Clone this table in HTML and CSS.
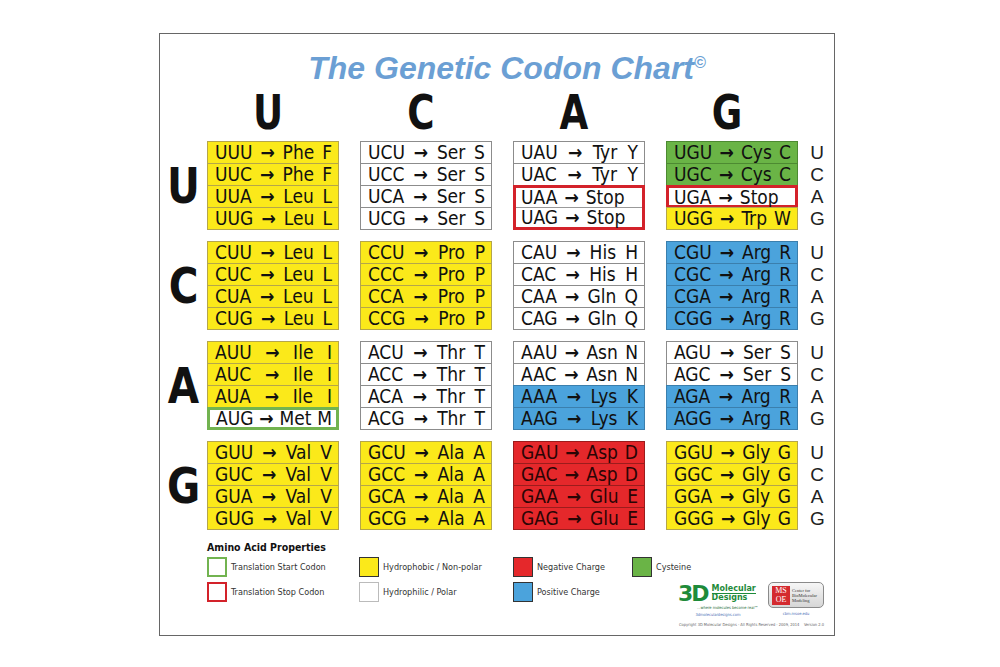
FILE: index.html
```html
<!DOCTYPE html>
<html>
<head>
<meta charset="utf-8">
<title>The Genetic Codon Chart</title>
<link rel="stylesheet" href="styles.css">
</head>
<body>
<div class="frame">
  <h1 class="title">The Genetic Codon Chart<sup>©</sup></h1>
  <div class="hdr"><span>U</span><span>C</span><span>A</span><span>G</span></div>

  <div class="grp">
    <div class="big">U</div>
    <div class="blocks">
      <div class="blk">
        <div class="c y"><span>UUU</span><span class="ar">→</span><span>Phe</span><span>F</span></div>
        <div class="c y"><span>UUC</span><span class="ar">→</span><span>Phe</span><span>F</span></div>
        <div class="c y"><span>UUA</span><span class="ar">→</span><span>Leu</span><span>L</span></div>
        <div class="c y"><span>UUG</span><span class="ar">→</span><span>Leu</span><span>L</span></div>
      </div>
      <div class="blk">
        <div class="c w"><span>UCU</span><span class="ar">→</span><span>Ser</span><span>S</span></div>
        <div class="c w"><span>UCC</span><span class="ar">→</span><span>Ser</span><span>S</span></div>
        <div class="c w"><span>UCA</span><span class="ar">→</span><span>Ser</span><span>S</span></div>
        <div class="c w"><span>UCG</span><span class="ar">→</span><span>Ser</span><span>S</span></div>
      </div>
      <div class="blk">
        <div class="c w"><span>UAU</span><span class="ar">→</span><span>Tyr</span><span>Y</span></div>
        <div class="c w"><span>UAC</span><span class="ar">→</span><span>Tyr</span><span>Y</span></div>
        <div class="stop two">
          <div class="c in"><span>UAA</span><span class="ar">→</span><span>Stop</span></div>
          <div class="c in"><span>UAG</span><span class="ar">→</span><span>Stop</span></div>
        </div>
      </div>
      <div class="blk">
        <div class="c g"><span>UGU</span><span class="ar">→</span><span>Cys</span><span>C</span></div>
        <div class="c g"><span>UGC</span><span class="ar">→</span><span>Cys</span><span>C</span></div>
        <div class="stop one">
          <div class="c in"><span>UGA</span><span class="ar">→</span><span>Stop</span></div>
        </div>
        <div class="c y"><span>UGG</span><span class="ar">→</span><span>Trp</span><span>W</span></div>
      </div>
    </div>
    <div class="side"><span>U</span><span>C</span><span>A</span><span>G</span></div>
  </div>

  <div class="grp">
    <div class="big">C</div>
    <div class="blocks">
      <div class="blk">
        <div class="c y"><span>CUU</span><span class="ar">→</span><span>Leu</span><span>L</span></div>
        <div class="c y"><span>CUC</span><span class="ar">→</span><span>Leu</span><span>L</span></div>
        <div class="c y"><span>CUA</span><span class="ar">→</span><span>Leu</span><span>L</span></div>
        <div class="c y"><span>CUG</span><span class="ar">→</span><span>Leu</span><span>L</span></div>
      </div>
      <div class="blk">
        <div class="c y"><span>CCU</span><span class="ar">→</span><span>Pro</span><span>P</span></div>
        <div class="c y"><span>CCC</span><span class="ar">→</span><span>Pro</span><span>P</span></div>
        <div class="c y"><span>CCA</span><span class="ar">→</span><span>Pro</span><span>P</span></div>
        <div class="c y"><span>CCG</span><span class="ar">→</span><span>Pro</span><span>P</span></div>
      </div>
      <div class="blk">
        <div class="c w"><span>CAU</span><span class="ar">→</span><span>His</span><span>H</span></div>
        <div class="c w"><span>CAC</span><span class="ar">→</span><span>His</span><span>H</span></div>
        <div class="c w"><span>CAA</span><span class="ar">→</span><span>Gln</span><span>Q</span></div>
        <div class="c w"><span>CAG</span><span class="ar">→</span><span>Gln</span><span>Q</span></div>
      </div>
      <div class="blk">
        <div class="c b"><span>CGU</span><span class="ar">→</span><span>Arg</span><span>R</span></div>
        <div class="c b"><span>CGC</span><span class="ar">→</span><span>Arg</span><span>R</span></div>
        <div class="c b"><span>CGA</span><span class="ar">→</span><span>Arg</span><span>R</span></div>
        <div class="c b"><span>CGG</span><span class="ar">→</span><span>Arg</span><span>R</span></div>
      </div>
    </div>
    <div class="side"><span>U</span><span>C</span><span>A</span><span>G</span></div>
  </div>

  <div class="grp">
    <div class="big">A</div>
    <div class="blocks">
      <div class="blk">
        <div class="c y"><span>AUU</span><span class="ar">→</span><span>Ile</span><span>I</span></div>
        <div class="c y"><span>AUC</span><span class="ar">→</span><span>Ile</span><span>I</span></div>
        <div class="c y"><span>AUA</span><span class="ar">→</span><span>Ile</span><span>I</span></div>
        <div class="c start"><span>AUG</span><span class="ar">→</span><span>Met</span><span>M</span></div>
      </div>
      <div class="blk">
        <div class="c w"><span>ACU</span><span class="ar">→</span><span>Thr</span><span>T</span></div>
        <div class="c w"><span>ACC</span><span class="ar">→</span><span>Thr</span><span>T</span></div>
        <div class="c w"><span>ACA</span><span class="ar">→</span><span>Thr</span><span>T</span></div>
        <div class="c w"><span>ACG</span><span class="ar">→</span><span>Thr</span><span>T</span></div>
      </div>
      <div class="blk">
        <div class="c w"><span>AAU</span><span class="ar">→</span><span>Asn</span><span>N</span></div>
        <div class="c w"><span>AAC</span><span class="ar">→</span><span>Asn</span><span>N</span></div>
        <div class="c b"><span>AAA</span><span class="ar">→</span><span>Lys</span><span>K</span></div>
        <div class="c b"><span>AAG</span><span class="ar">→</span><span>Lys</span><span>K</span></div>
      </div>
      <div class="blk">
        <div class="c w"><span>AGU</span><span class="ar">→</span><span>Ser</span><span>S</span></div>
        <div class="c w"><span>AGC</span><span class="ar">→</span><span>Ser</span><span>S</span></div>
        <div class="c b"><span>AGA</span><span class="ar">→</span><span>Arg</span><span>R</span></div>
        <div class="c b"><span>AGG</span><span class="ar">→</span><span>Arg</span><span>R</span></div>
      </div>
    </div>
    <div class="side"><span>U</span><span>C</span><span>A</span><span>G</span></div>
  </div>

  <div class="grp">
    <div class="big">G</div>
    <div class="blocks">
      <div class="blk">
        <div class="c y"><span>GUU</span><span class="ar">→</span><span>Val</span><span>V</span></div>
        <div class="c y"><span>GUC</span><span class="ar">→</span><span>Val</span><span>V</span></div>
        <div class="c y"><span>GUA</span><span class="ar">→</span><span>Val</span><span>V</span></div>
        <div class="c y"><span>GUG</span><span class="ar">→</span><span>Val</span><span>V</span></div>
      </div>
      <div class="blk">
        <div class="c y"><span>GCU</span><span class="ar">→</span><span>Ala</span><span>A</span></div>
        <div class="c y"><span>GCC</span><span class="ar">→</span><span>Ala</span><span>A</span></div>
        <div class="c y"><span>GCA</span><span class="ar">→</span><span>Ala</span><span>A</span></div>
        <div class="c y"><span>GCG</span><span class="ar">→</span><span>Ala</span><span>A</span></div>
      </div>
      <div class="blk">
        <div class="c r"><span>GAU</span><span class="ar">→</span><span>Asp</span><span>D</span></div>
        <div class="c r"><span>GAC</span><span class="ar">→</span><span>Asp</span><span>D</span></div>
        <div class="c r"><span>GAA</span><span class="ar">→</span><span>Glu</span><span>E</span></div>
        <div class="c r"><span>GAG</span><span class="ar">→</span><span>Glu</span><span>E</span></div>
      </div>
      <div class="blk">
        <div class="c y"><span>GGU</span><span class="ar">→</span><span>Gly</span><span>G</span></div>
        <div class="c y"><span>GGC</span><span class="ar">→</span><span>Gly</span><span>G</span></div>
        <div class="c y"><span>GGA</span><span class="ar">→</span><span>Gly</span><span>G</span></div>
        <div class="c y"><span>GGG</span><span class="ar">→</span><span>Gly</span><span>G</span></div>
      </div>
    </div>
    <div class="side"><span>U</span><span>C</span><span>A</span><span>G</span></div>
  </div>

  <div class="legend">
    <div class="lh">Amino Acid Properties</div>
    <div class="lg">
      <div class="li"><span class="sw sw-start"></span>Translation Start Codon</div>
      <div class="li"><span class="sw y"></span>Hydrophobic / Non-polar</div>
      <div class="li"><span class="sw r"></span>Negative Charge</div>
      <div class="li"><span class="sw g"></span>Cysteine</div>
      <div class="li"><span class="sw sw-stop"></span>Translation Stop Codon</div>
      <div class="li"><span class="sw w"></span>Hydrophilic / Polar</div>
      <div class="li"><span class="sw b"></span>Positive Charge</div>
      <div class="logos">
        <div class="logo-row">
          <div class="mdlogo">
            <div class="md-top"><span class="md3d">3D</span><span class="md-name"><span class="md-mol">Molecular</span><span>Designs</span></span></div>
            <div class="md-tag">...where molecules become real™</div>
            <div class="md-url">3dmoleculardesigns.com</div>
          </div>
          <div class="cbm">
            <div class="cbm-box"><span class="msoe"><span>MS</span><span>OE</span></span><span class="cbm-txt">Center for<br>BioMolecular<br>Modeling</span></div>
            <div class="cbm-url">cbm.msoe.edu</div>
          </div>
        </div>
        <div class="copy">Copyright 3D Molecular Designs - All Rights Reserved - 2009, 2014 &nbsp; &nbsp;Version 2.0</div>
      </div>
    </div>
  </div>
</div>
</body>
</html>
```

FILE: styles.css
```css
* { box-sizing: border-box; }
html, body { margin: 0; padding: 0; background: #fff; }
body { font-family: "DejaVu Sans Condensed", "DejaVu Sans", sans-serif; color: #111; }

.frame {
  margin: 33px 0 0 159px;
  width: 676px;
  height: 603px;
  border: 1px solid #666;
}

.title {
  margin: 16px 0 0;
  padding-left: 20px;
  text-align: center;
  font: italic bold 32px/36px "Liberation Sans", Arial, sans-serif;
  color: #6b9fd4;
}
.title sup { font-size: 16px; line-height: 0; vertical-align: 11px; }

.hdr { display: flex; gap: 21px; padding-left: 42px; margin: 4px 0 7px; }
.hdr span {
  width: 132px;
  text-align: center;
  font: bold 48px/44px "DejaVu Sans Condensed", sans-serif;
  color: #111;
  transform: scaleX(0.86);
}

.grp { display: flex; align-items: center; margin-bottom: 11px; }
.big {
  width: 47px;
  text-align: center;
  font: bold 50px/1 "DejaVu Sans Condensed", sans-serif;
  color: #111;
  transform: scaleX(0.9);
}
.blocks { display: flex; gap: 21px; }
.blk { width: 132px; display: flex; flex-direction: column; }
.blk > * + * { margin-top: -1px; }

.c {
  height: 23px;
  border: 1px solid #888;
  display: flex;
  justify-content: space-between;
  align-items: center;
  padding: 0 6px 0 7px;
  font-size: 19px;
  line-height: 1;
  color: #111;
}
.ar { font-weight: bold; font-size: 19px; }

.y { background: #fbe91a; border-color: #b5a64a; }
.w { background: #fff; border-color: #8c8c8c; }
.b { background: #4ba3dc; border-color: #3b7fad; }
.r { background: #e5282b; border-color: #9c1c1c; }
.r.c { color: #2a0505; }
.g { background: #6ab446; border-color: #4d8a32; }

.stop {
  border: 3px solid #d3222a;
  background: #fff;
  display: flex;
  flex-direction: column;
}
.stop.two { height: 45px; }
.stop.one { height: 23px; }
.c.in {
  border: none;
  height: auto;
  flex: 1;
  margin-top: 0;
  padding: 0 4px 0 5px;
  justify-content: flex-start;
  gap: 7px;
}
.c.in + .c.in { border-top: 1px solid #999; }
.c.start {
  border: 3px solid #72b350;
  background: #fff;
  padding: 0 4px 0 6px;
}

.side {
  align-self: flex-start;
  margin-left: 12px;
  width: 14px;
  display: flex;
  flex-direction: column;
  padding-top: 1px;
}
.side span {
  height: 22px;
  text-align: center;
  font: 19px/22px "Liberation Sans", Arial, sans-serif;
  color: #222;
}

.legend { padding-left: 47px; }
.lh { font: bold 10.5px/13px "DejaVu Sans Condensed", sans-serif; color: #111; margin-bottom: 3px; }
.lg {
  display: grid;
  grid-template-columns: 152px 154px 119px 1fr;
  grid-template-rows: 20px 20px auto;
  row-gap: 5px;
}
.li { display: flex; align-items: center; font-size: 9px; color: #333; }
.sw { width: 20px; height: 20px; border: 1px solid; margin-right: 4px; flex: none; }
.sw.w { border-color: #bbb; }
.sw-start { border: 2px solid #72b350; background: #fff; }
.sw-stop { border: 2px solid #d3222a; background: #fff; }

.logos { grid-column: 4; grid-row: 2 / span 2; margin-left: 46px; padding-right: 10px; }
.logo-row { display: flex; justify-content: space-between; align-items: flex-start; }
.mdlogo { width: 80px; padding-top: 1px; }
.md-top { display: flex; align-items: center; height: 21px; }
.md3d {
  font: bold 22px/21px "DejaVu Sans", sans-serif;
  color: #1e8b3a;
  letter-spacing: -2px;
}
.md-name {
  display: flex;
  flex-direction: column;
  margin-left: 4px;
  font: bold 8px/8px "DejaVu Sans", sans-serif;
  color: #1e8b3a;
}
.md-mol { border-bottom: 1px solid #1e8b3a; }
.md-tag { font-size: 4px; line-height: 5px; color: #1e6b3a; text-align: right; margin-top: 1px; }
.md-url { font-size: 4px; line-height: 5px; color: #4a6fb5; text-align: center; margin-top: 2px; }

.cbm { width: 56px; }
.cbm-box {
  height: 26px;
  border: 1.5px solid #8a8a8a;
  border-radius: 5px;
  background: linear-gradient(#f6f6f6, #d6d6d6);
  display: flex;
  align-items: center;
  padding: 0 3px;
  gap: 2px;
}
.msoe {
  width: 18px;
  height: 19px;
  background: #d42a2f;
  color: #fff;
  font: 8px/9px "Liberation Serif", serif;
  display: flex;
  flex-direction: column;
  align-items: center;
  justify-content: center;
  flex: none;
}
.cbm-txt { font: 4.5px/5px "Liberation Serif", serif; color: #333; }
.cbm-url { text-align: center; font-size: 4px; line-height: 5px; color: #4a6fb5; margin-top: 3px; }
.copy { font-size: 4px; line-height: 5px; color: #666; margin-top: 5px; text-align: right; }
```
